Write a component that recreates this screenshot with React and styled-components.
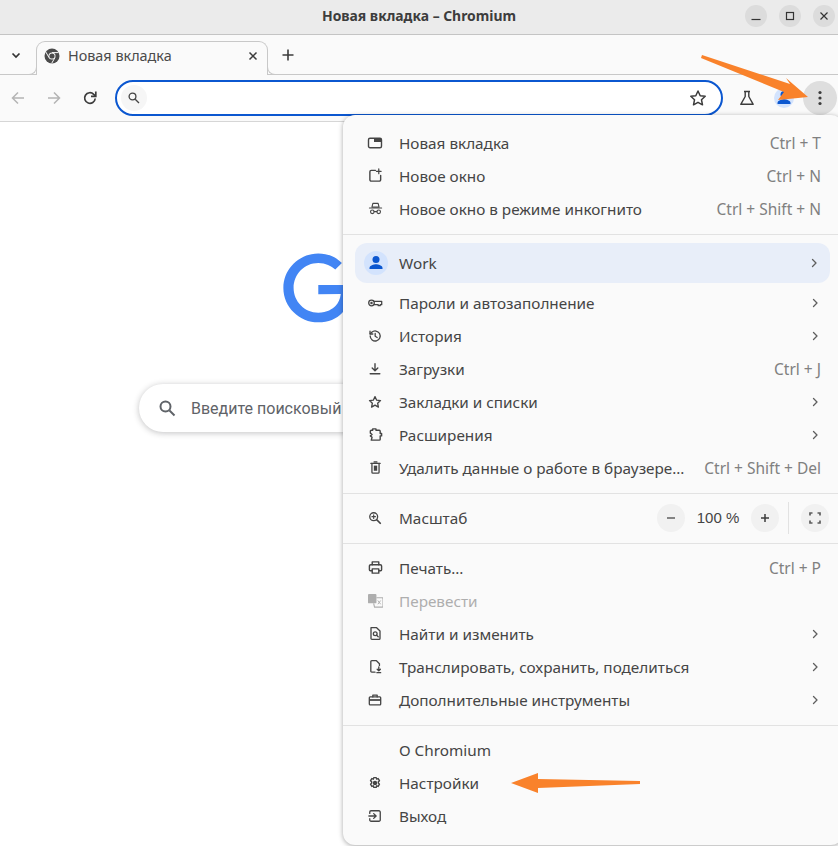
import React from 'react';
import styled, { createGlobalStyle } from 'styled-components';

const UI_FONT = '"Noto Sans", "Open Sans", sans-serif';

const GlobalStyle = createGlobalStyle`
  html, body {
    margin: 0;
    padding: 0;
    background: #fff;
  }
  * {
    box-sizing: border-box;
  }
`;

// small helper for the menu glyphs, drawn on a 16 unit grid
const Glyph = ({ children, size = 14, sw = 1.5 }) => (
  <svg width={size} height={size} viewBox="0 0 16 16" fill="none" stroke="currentColor" strokeWidth={sw} strokeLinecap="round" strokeLinejoin="round">
    {children}
  </svg>
);

const icons = {
  newTab: (
    <Glyph size={16} sw={1.4}>
      <rect x="1.5" y="3.2" width="13" height="9.600" rx="1.500" />
      <path d="M7 3.500h7v3.500H7z" fill="currentColor" stroke="none" />
    </Glyph>
  ),
  newWindow: (
    <Glyph size={15} sw={1.5}>
      <path d="M8 2.500H3.500A1.500 1.500 0 0 0 2 4v8.500A1.500 1.500 0 0 0 3.500 14H12a1.500 1.500 0 0 0 1.500-1.500V8" />
      <path d="M11.500 1v5M9 3.500h5" strokeWidth="1.300" />
    </Glyph>
  ),
  incognito: (
    <Glyph size={15} sw={1.2}>
      <path d="M5.200 2.500h5.600l1 4H4.200z" fill="none" />
      <path d="M1.500 7.500h13" />
      <circle cx="4.600" cy="11.500" r="1.900" />
      <circle cx="11.400" cy="11.500" r="1.900" />
      <path d="M6.500 11.300h3" />
    </Glyph>
  ),
  key: (
    <Glyph size={16} sw={1.3}>
      <circle cx="4.500" cy="8" r="2.800" />
      <circle cx="4.500" cy="8" r=".6" fill="currentColor" />
      <path d="M7.300 6.300h7.400v3.400h-1.500v1h-2v-1H7.300" />
    </Glyph>
  ),
  history: (
    <Glyph>
      <path d="M2.500 8a5.700 5.700 0 1 0 1.800-4.200L2.500 5.500" />
      <path d="M2.300 2.500v3.200h3.200" />
      <path d="M8.200 5v3.300l2.300 1.400" />
    </Glyph>
  ),
  download: (
    <Glyph sw={1.6}>
      <path d="M8 2v7.500M4.800 6.800 8 10l3.200-3.200" />
      <path d="M2.500 13.500h11" />
    </Glyph>
  ),
  star: (
    <Glyph sw={1.500}>
      <path d="m8 1.800 1.900 4.100 4.400.5-3.300 3 .9 4.500L8 11.600l-3.900 2.300.9-4.500-3.300-3 4.400-.5z" />
    </Glyph>
  ),
  puzzle: (
    <Glyph size={15} sw={1.500}>
      <path d="M5 3.500V2h3.500v1.500h3.500a1 1 0 0 1 1 1V7h1.500v2.500H13V13a1 1 0 0 1-1 1H3.500l.8-3-1.800-1.500L4.300 8l-1.800-1.500V4.500a1 1 0 0 1 1-1z" />
    </Glyph>
  ),
  trash: (
    <Glyph size={15} sw={1.4}>
      <path d="M3 3.500h10M6.500 2h3" />
      <path d="M4.200 3.500V13a1 1 0 0 0 1 1h5.600a1 1 0 0 0 1-1V3.500" />
      <path d="M6.200 6h3.600v5.500H6.200z" fill="currentColor" stroke="none" />
    </Glyph>
  ),
  zoom: (
    <Glyph sw={1.500}>
      <circle cx="6.500" cy="6.500" r="4.500" />
      <path d="m10 10 4 4" strokeWidth="2" />
      <path d="M6.500 4.500v4M4.500 6.500h4" strokeWidth="1.300" />
    </Glyph>
  ),
  print: (
    <Glyph size={15} sw={1.500}>
      <path d="M4.500 5V2h7v3" />
      <path d="M4 11.500H2.500a1 1 0 0 1-1-1V6.500A1.500 1.500 0 0 1 3 5h10a1.500 1.500 0 0 1 1.500 1.500v4a1 1 0 0 1-1 1H12" />
      <path d="M4.500 9.500h7V14h-7z" />
    </Glyph>
  ),
  translate: (
    <svg width="15" height="15" viewBox="0 0 16 16">
      <rect x="0" y="1" width="9" height="10" rx="1" fill="currentColor" />
      <path d="M9 5h6a1 1 0 0 1 1 1v8a1 1 0 0 1-1 1H7l-1-4" fill="none" stroke="currentColor" strokeWidth="1.200" />
      <path d="M10.500 8l3 4M13.500 8l-3 4" stroke="currentColor" strokeWidth="1" />
    </svg>
  ),
  find: (
    <Glyph size={15} sw={1.4}>
      <path d="M3.200 1.800h6l3.600 3.500v8a1 1 0 0 1-1 1H4.200a1 1 0 0 1-1-1z" />
      <circle cx="7.700" cy="8.300" r="2" />
      <path d="m9.200 9.800 1.700 1.700" />
    </Glyph>
  ),
  cast: (
    <Glyph size={15} sw={1.4}>
      <path d="M7.500 14H4a1 1 0 0 1-1-1V2.800a1 1 0 0 1 1-1h5l3.200 3.200V7" />
      <path d="M11.500 8.500v4M9.800 11l1.700 1.700 1.700-1.700M9.500 14.600h4" />
    </Glyph>
  ),
  tools: (
    <Glyph sw={1.500}>
      <path d="M5.500 4.500V2.500h5v2" />
      <rect x="1.500" y="4.500" width="13" height="9" rx="1" />
      <path d="M1.500 7h13v2h-13z" fill="currentColor" stroke="none" />
    </Glyph>
  ),
  gear: (
    <Glyph sw={1.6}>
      <path d="M6.600 1.800h2.800l.5 1.800 1.700-.7 1.500 2.500-1.300 1.300v1.400l1.300 1.300-1.500 2.500-1.700-.7-.5 1.800H6.600l-.5-1.800-1.700.7-1.500-2.500 1.300-1.300V6.700L2.900 5.400l1.500-2.500 1.700.7z" />
      <circle cx="8" cy="8" r="1.700" fill="currentColor" />
    </Glyph>
  ),
  exit: (
    <Glyph sw={1.500}>
      <path d="M2 5V3.500A1.500 1.500 0 0 1 3.500 2h9A1.500 1.500 0 0 1 14 3.500v9a1.500 1.500 0 0 1-1.500 1.500h-9A1.500 1.500 0 0 1 2 12.500V11" />
      <path d="M1 8h8M6.500 5.300 9.300 8l-2.800 2.700" />
    </Glyph>
  ),
};

const Chevron = () => (
  <svg width="10" height="10" viewBox="0 0 10 10" fill="none" stroke="#5e5e5e" strokeWidth="1.300" strokeLinecap="round" strokeLinejoin="round">
    <path d="m3.500 1.500 3.500 3.500-3.500 3.500" />
  </svg>
);

const Person = ({ color = '#0b57d0', size = 18 }) => (
  <svg width={size} height={size} viewBox="0 0 18 18" fill={color}>
    <circle cx="9" cy="5.500" r="3.500" />
    <path d="M2.500 15v-1c0-2.500 4.300-3.700 6.500-3.700s6.500 1.200 6.500 3.700v1z" />
  </svg>
);

const topItems = [
  { icon: 'newTab', label: 'Новая вкладка', hint: 'Ctrl + T' },
  { icon: 'newWindow', label: 'Новое окно', hint: 'Ctrl + N' },
  { icon: 'incognito', label: 'Новое окно в режиме инкогнито', hint: 'Ctrl + Shift + N' },
];

const profileItems = [
  { icon: 'key', label: 'Пароли и автозаполнение', more: true },
  { icon: 'history', label: 'История', more: true },
  { icon: 'download', label: 'Загрузки', hint: 'Ctrl + J' },
  { icon: 'star', label: 'Закладки и списки', more: true },
  { icon: 'puzzle', label: 'Расширения', more: true },
  { icon: 'trash', label: 'Удалить данные о работе в браузере…', hint: 'Ctrl + Shift + Del' },
];

const toolItems = [
  { icon: 'print', label: 'Печать…', hint: 'Ctrl + P' },
  { icon: 'translate', label: 'Перевести', disabled: true },
  { icon: 'find', label: 'Найти и изменить', more: true },
  { icon: 'cast', label: 'Транслировать, сохранить, поделиться', more: true },
  { icon: 'tools', label: 'Дополнительные инструменты', more: true },
];

const bottomItems = [
  { label: 'О Chromium' },
  { icon: 'gear', label: 'Настройки' },
  { icon: 'exit', label: 'Выход' },
];

const MenuItem = ({ item }) => (
  <Row $disabled={item.disabled}>
    <RowIcon>{item.icon && icons[item.icon]}</RowIcon>
    <RowLabel>{item.label}</RowLabel>
    {item.hint && <Hint>{item.hint}</Hint>}
    {item.more && <More><Chevron /></More>}
  </Row>
);

const MenuGroup = ({ items, $gap }) => (
  <Group $gap={$gap}>
    {items.map((item) => <MenuItem key={item.label} item={item} />)}
  </Group>
);

const App = () => {
  return (
    <Win>
      <GlobalStyle />
      <TitleBar>
        <Title>Новая вкладка – Chromium</Title>
        <WinButtons>
          <WinButton>
            <svg width="12" height="12" viewBox="0 0 12 12" stroke="#333" strokeWidth="1.200"><path d="M1.500 9.500h9" /></svg>
          </WinButton>
          <WinButton>
            <svg width="12" height="12" viewBox="0 0 12 12" fill="none" stroke="#333" strokeWidth="1.200"><rect x="2.500" y="2.500" width="7" height="7" /></svg>
          </WinButton>
          <WinButton>
            <svg width="12" height="12" viewBox="0 0 12 12" stroke="#333" strokeWidth="1.200"><path d="m2.500 2.500 7 7M9.500 2.500l-7 7" /></svg>
          </WinButton>
        </WinButtons>
      </TitleBar>

      <TabStrip>
        <TabListButton>
          <svg width="12" height="12" viewBox="0 0 12 12" fill="none" stroke="#333" strokeWidth="1.700"><path d="m2.500 4.500 3.500 3.500 3.500-3.500" /></svg>
        </TabListButton>
        <Tab>
          <svg width="16" height="16" viewBox="0 0 16 16">
            <circle cx="8" cy="8" r="7.500" fill="#4b4b4b" />
            <path d="M8 4.600h6.400M5.100 9.700 1.900 4.100M10.900 9.700l-3.200 5.600" stroke="#fafafa" strokeWidth="1" />
            <circle cx="8" cy="8" r="3.500" fill="#fafafa" />
            <circle cx="8" cy="8" r="2.600" fill="#4b4b4b" />
          </svg>
          <TabTitle>Новая вкладка</TabTitle>
          <TabClose>
            <svg width="10" height="10" viewBox="0 0 10 10" stroke="#3c3c3c" strokeWidth="1.500"><path d="m1.500 1.500 7 7M8.500 1.500l-7 7" /></svg>
          </TabClose>
        </Tab>
        <NewTabButton>
          <svg width="12" height="12" viewBox="0 0 12 12" stroke="#3c3c3c" strokeWidth="1.600"><path d="M6 .5v11M.5 6h11" /></svg>
        </NewTabButton>
      </TabStrip>

      <Toolbar>
        <NavButton>
          <svg width="16" height="16" viewBox="0 0 16 16" fill="none" stroke="#b4b4b4" strokeWidth="1.500"><path d="M14 8H2.500M8 2.500 2.500 8 8 13.500" /></svg>
        </NavButton>
        <NavButton>
          <svg width="16" height="16" viewBox="0 0 16 16" fill="none" stroke="#b4b4b4" strokeWidth="1.500"><path d="M2 8h11.500M8 2.500 13.500 8 8 13.500" /></svg>
        </NavButton>
        <NavButton>
          <svg width="16" height="16" viewBox="0 0 16 16" fill="none" stroke="#3c3c3c" strokeWidth="1.700"><path d="M13.200 8.500a5.300 5.300 0 1 1-1.500-4.200l1.700 1.500" /><path d="M13.800 1.500v4.800H9" /></svg>
        </NavButton>
        <Omnibox>
          <OmniIcon>
            <svg width="14" height="14" viewBox="0 0 14 14" fill="none" stroke="#444" strokeWidth="1.300"><circle cx="5.500" cy="5.500" r="3.400" /><path d="m8.200 8.200 3.800 3.800" /></svg>
          </OmniIcon>
          <svg width="18" height="18" viewBox="0 0 18 18" fill="none" stroke="#3c3c3c" strokeWidth="1.500" strokeLinejoin="round"><path d="m9 2 2.200 4.700 5 .6-3.700 3.500 1 5L9 13.300l-4.500 2.500 1-5-3.700-3.500 5-.6z" /></svg>
        </Omnibox>
        <ToolIcons>
          <ToolButton>
            <svg width="16" height="16" viewBox="0 0 16 16" fill="none" stroke="#3c3c3c" strokeWidth="1.400" strokeLinejoin="round"><path d="M5 1.500h6M6.200 1.500v5L1.800 14.300h12.400L9.800 6.500v-5" /></svg>
          </ToolButton>
          <Avatar><Person size={18} /></Avatar>
          <MenuButton>
            <svg width="4" height="16" viewBox="0 0 4 16" fill="#3c3c3c"><circle cx="2" cy="2.500" r="1.600" /><circle cx="2" cy="8" r="1.600" /><circle cx="2" cy="13.500" r="1.600" /></svg>
          </MenuButton>
        </ToolIcons>
      </Toolbar>

      <Page>
        <svg width="272" height="92" viewBox="0 0 272 92">
          <path fill="#4285f4" d="M35.290 41.410V32H67c.31 1.640.47 3.580.47 5.680 0 7.060-1.930 15.790-8.150 22.010-6.050 6.300-13.780 9.660-24.020 9.660C16.320 69.350.36 53.890.36 34.910.36 15.930 16.320.47 35.300.47c10.500 0 17.980 4.120 23.600 9.490l-6.640 6.640c-4.030-3.780-9.490-6.720-16.970-6.720-13.860 0-24.700 11.170-24.700 24.890 0 13.720 10.840 24.890 24.700 24.890 8.990 0 14.110-3.610 17.390-6.890 2.660-2.660 4.410-6.460 5.100-11.650l-22.490.01z" />
        </svg>
        <SearchBox>
          <svg width="18" height="18" viewBox="0 0 18 18" fill="none" stroke="#5f6368" strokeWidth="2"><circle cx="7.500" cy="7.500" r="5" /><path d="m11.500 11.500 5 5" /></svg>
          <SearchText>Введите поисковый запрос или URL</SearchText>
        </SearchBox>
        <Shortcut>
          <ShortcutCircle />
          <ShortcutLabel>Интернет-магазин</ShortcutLabel>
        </Shortcut>
      </Page>

      <Menu>
        <MenuGroup items={topItems} />
        <Divider />
        <ProfileRow>
          <ProfileAvatar><Person size={18} /></ProfileAvatar>
          <RowLabel>Work</RowLabel>
          <More><Chevron /></More>
        </ProfileRow>
        <MenuGroup items={profileItems} $gap />
        <Divider />
        <Row>
          <RowIcon>{icons.zoom}</RowIcon>
          <RowLabel>Масштаб</RowLabel>
          <ZoomControls>
            <ZoomButton>
              <svg width="10" height="10" viewBox="0 0 10 10" stroke="#5e5e5e" strokeWidth="1.500"><path d="M1 5h8" /></svg>
            </ZoomButton>
            <ZoomValue>100 %</ZoomValue>
            <ZoomButton>
              <svg width="10" height="10" viewBox="0 0 10 10" stroke="#3c3c3c" strokeWidth="1.500"><path d="M1 5h8M5 1v8" /></svg>
            </ZoomButton>
            <ZoomRule />
            <ZoomButton>
              <svg width="12" height="12" viewBox="0 0 12 12" fill="none" stroke="#5e5e5e" strokeWidth="1.700"><path d="M1 3.500V1h2.500M8.500 1H11v2.500M11 8.500V11H8.500M3.500 11H1V8.500" /></svg>
            </ZoomButton>
          </ZoomControls>
        </Row>
        <Divider />
        <MenuGroup items={toolItems} />
        <Divider />
        <MenuGroup items={bottomItems} />
      </Menu>

      <Annotation viewBox="0 0 838 846" width="838" height="846">
        <polygon fill="#f9822b" points="702,55 790,84 786,78 808,97 778,100 784,92 701,58" />
        <polygon fill="#f9822b" points="511,783 538,773 538,779 640,781 640,784 538,788 538,793" />
      </Annotation>
    </Win>
  );
};

export default App;

// STYLED COMPONENTS
const Win = styled.div`
  position: relative;
  width: 838px;
  height: 846px;
  overflow: hidden;
  display: flex;
  flex-direction: column;
  font-family: ${UI_FONT};
  background: #fff;
`;

const TitleBar = styled.div`
  height: 35px;
  flex: none;
  display: flex;
  align-items: center;
  justify-content: center;
  padding-bottom: 3px;
  background: #ebebeb;
  border-bottom: 1px solid #c4c4c4;
  position: relative;
`;

const Title = styled.div`
  font-size: 13.900px;
  font-weight: 700;
  color: #3d3d3d;
`;

const WinButtons = styled.div`
  position: absolute;
  right: 3px;
  top: 5px;
  display: flex;
  gap: 12px;
`;

const WinButton = styled.div`
  width: 22px;
  height: 22px;
  border-radius: 50%;
  background: #dcdcdc;
  display: flex;
  align-items: center;
  justify-content: center;
`;

const TabStrip = styled.div`
  height: 40px;
  flex: none;
  display: flex;
  align-items: flex-end;
  padding-left: 36px;
  background: #fafafa;
  border-bottom: 1px solid #c8c8c8;
  position: relative;
`;

const TabListButton = styled.div`
  position: absolute;
  left: 10px;
  top: 14px;
  display: flex;
`;

const Tab = styled.div`
  position: relative;
  width: 232px;
  height: 34px;
  margin-bottom: -1px;
  padding: 0 9px 6px 7px;
  display: flex;
  align-items: center;
  gap: 8px;
  background: #fafafa;
  border: 1px solid #c8c8c8;
  border-bottom: none;
  border-radius: 9px 9px 0 0;

  &::before,
  &::after {
    content: '';
    position: absolute;
    bottom: 0;
    width: 8px;
    height: 8px;
    border-bottom: 1px solid #c8c8c8;
  }
  &::before {
    left: -9px;
    border-right: 1px solid #c8c8c8;
    border-bottom-right-radius: 8px;
  }
  &::after {
    right: -9px;
    border-left: 1px solid #c8c8c8;
    border-bottom-left-radius: 8px;
  }
`;

const TabTitle = styled.span`
  flex: 1;
  font-size: 14.400px;
  color: #4a4a4a;
`;

const TabClose = styled.span`
  display: flex;
`;

const NewTabButton = styled.div`
  display: flex;
  margin: 0 0 13px 14px;
`;

const Toolbar = styled.div`
  height: 47px;
  flex: none;
  display: flex;
  align-items: center;
  background: #fafafa;
  border-bottom: 1px solid #d6d6d6;
`;

const NavButton = styled.div`
  width: 36px;
  display: flex;
  justify-content: center;
`;

const Omnibox = styled.div`
  width: 608px;
  height: 36px;
  margin-left: 7px;
  padding: 0 14px 0 4px;
  display: flex;
  align-items: center;
  justify-content: space-between;
  background: #fff;
  border: 2px solid #0b57d0;
  border-radius: 18px;
`;

const OmniIcon = styled.div`
  width: 26px;
  height: 26px;
  border-radius: 50%;
  background: #f6f6f6;
  display: flex;
  align-items: center;
  justify-content: center;
`;

const ToolIcons = styled.div`
  display: flex;
  align-items: center;
  margin-left: 15px;
`;

const ToolButton = styled.div`
  width: 18px;
  display: flex;
  justify-content: center;
`;

const Avatar = styled.div`
  width: 20px;
  height: 20px;
  margin-left: 18px;
  border-radius: 50%;
  background: #d3e3fd;
  display: flex;
  align-items: center;
  justify-content: center;
  overflow: hidden;
`;

const MenuButton = styled.div`
  width: 34px;
  height: 34px;
  margin-left: 9px;
  border-radius: 50%;
  background: #dedede;
  display: flex;
  align-items: center;
  justify-content: center;
`;

const Page = styled.main`
  flex: 1;
  display: flex;
  flex-direction: column;
  align-items: center;
  padding-top: 131px;
  background: #fff;
`;

const SearchBox = styled.div`
  width: 560px;
  height: 48px;
  margin-top: 39px;
  padding-left: 19px;
  display: flex;
  align-items: center;
  gap: 15px;
  background: #fff;
  border-radius: 24px;
  box-shadow: 0 1px 6px rgba(32, 33, 36, 0.28);
`;

const SearchText = styled.span`
  font-family: Roboto, sans-serif;
  font-size: 16px;
  color: #5f6368;
`;

const Shortcut = styled.div`
  margin-top: 41px;
  display: flex;
  flex-direction: column;
  align-items: center;
  gap: 14px;
`;

const ShortcutCircle = styled.div`
  width: 48px;
  height: 48px;
  border-radius: 50%;
  background: #f1f3f4;
`;

const ShortcutLabel = styled.div`
  font-family: "Liberation Sans", Arial, sans-serif;
  font-size: 13px;
  color: #111;
`;

const Menu = styled.div`
  position: absolute;
  left: 343px;
  top: 115px;
  width: 500px;
  height: 730px;
  padding: 11px 22px 0 0;
  display: flex;
  flex-direction: column;
  background: #fafafa;
  border-radius: 12px;
  box-shadow: 0 1px 5px rgba(0, 0, 0, 0.35);
  font-size: 15.300px;
  color: #454545;
`;

const Group = styled.div`
  display: flex;
  flex-direction: column;
  ${(p) => p.$gap && 'margin-top: 3px;'}
`;

const Row = styled.div`
  height: 33px;
  flex: none;
  padding-left: 24px;
  display: flex;
  align-items: center;
  color: ${(p) => (p.$disabled ? '#aeaeae' : '#454545')};
`;

const RowIcon = styled.span`
  width: 16px;
  height: 16px;
  margin-right: 16px;
  flex: none;
  display: flex;
  align-items: center;
  justify-content: center;
`;

const RowLabel = styled.span`
  flex: 1;
  white-space: nowrap;
`;

const Hint = styled.span`
  font-size: 15.500px;
  color: #808080;
  white-space: nowrap;
`;

const More = styled.span`
  display: flex;
  margin-right: 1px;
`;

const Divider = styled.div`
  height: 1px;
  flex: none;
  margin: 9px -22px 7px 0;
  background: #e2e2e2;
`;

const ProfileRow = styled.div`
  height: 40px;
  flex: none;
  margin: 1px -9px 0 12px;
  padding: 0 10px 0 9px;
  display: flex;
  align-items: center;
  gap: 11px;
  background: #e8eef9;
  border-radius: 12px;
`;

const ProfileAvatar = styled.span`
  width: 24px;
  height: 24px;
  border-radius: 50%;
  background: #d3e3fd;
  display: flex;
  align-items: center;
  justify-content: center;
`;

const ZoomControls = styled.div`
  display: flex;
  align-items: center;
  margin-right: -8px;
`;

const ZoomButton = styled.span`
  width: 28px;
  height: 28px;
  border-radius: 50%;
  background: #f1f1f1;
  display: flex;
  align-items: center;
  justify-content: center;
`;

const ZoomValue = styled.span`
  width: 66px;
  text-align: center;
  font-family: "Liberation Sans", Arial, sans-serif;
  font-size: 15px;
`;

const ZoomRule = styled.span`
  width: 1px;
  height: 32px;
  margin: 0 12px 0 9px;
  background: #e2e2e2;
`;

const Annotation = styled.svg`
  position: absolute;
  left: 0;
  top: 0;
  pointer-events: none;
`;
